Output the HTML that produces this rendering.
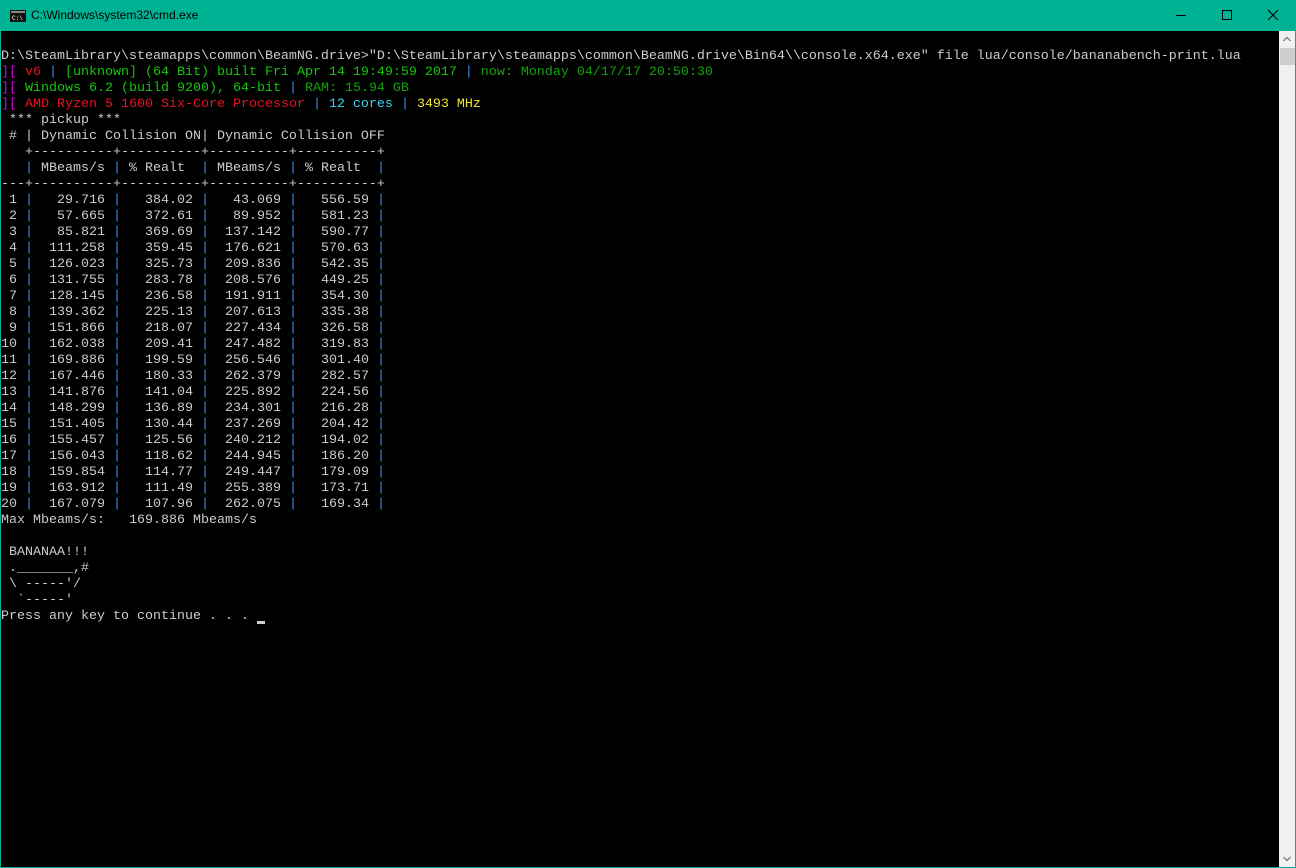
<!DOCTYPE html>
<html><head><meta charset="utf-8"><style>
html,body{margin:0;padding:0;}
body{width:1296px;height:868px;background:#00b294;position:relative;overflow:hidden;}
#title{position:absolute;left:0;top:0;width:1296px;height:31px;}
#title .t{position:absolute;left:31px;top:8px;font:12px "Liberation Sans",sans-serif;color:#000;}
#con{position:absolute;left:1px;top:31px;width:1278px;height:836px;background:#000;}
pre{margin:0;position:absolute;left:0;top:18px;font-family:"Liberation Mono",monospace;font-size:13.333px;line-height:16px;color:#cccccc;}
.m{color:#e000e0}.r{color:#e81123}.g{color:#16c60c}.dg{color:#13a10e}.b{color:#3b8eea}.c{color:#3ad6f0}.y{color:#f1e630}
#sb{position:absolute;left:1279px;top:31px;width:16px;height:836px;background:#f0f0f0;}
#thumb{position:absolute;left:1280px;top:48px;width:15px;height:17px;background:#cdcdcd;}
#cur{position:absolute;left:257px;top:621px;width:8px;height:3px;background:#ccc;}
</style></head><body>
<div id="title">
<svg width="16" height="12" style="position:absolute;left:10px;top:10px"><rect x="0" y="0" width="16" height="12" fill="#111"/><rect x="1" y="1" width="14" height="2" fill="#888"/><text x="2" y="10" font-size="6" fill="#fff" font-family="Liberation Mono">C:\</text></svg>
<div class="t">C:\Windows\system32\cmd.exe</div>
<svg width="140" height="31" style="position:absolute;left:1156px;top:0">
<line x1="20" y1="15.5" x2="30" y2="15.5" stroke="#000"/>
<rect x="66.5" y="10.5" width="9" height="9" fill="none" stroke="#000"/>
<line x1="112" y1="10" x2="122" y2="20" stroke="#000"/><line x1="122" y1="10" x2="112" y2="20" stroke="#000"/>
</svg>
</div>
<div id="con"><pre>D:\SteamLibrary\steamapps\common\BeamNG.drive&gt;"D:\SteamLibrary\steamapps\common\BeamNG.drive\Bin64\\console.x64.exe" file lua/console/bananabench-print.lua
<span class="m">][</span> <span class="r">v6</span> <span class="b">|</span> <span class="g">[unknown] (64 Bit) built Fri Apr 14 19:49:59 2017</span> <span class="b">|</span> <span class="dg">now: Monday 04/17/17 20:50:30</span>
<span class="m">][</span> <span class="g">Windows 6.2 (build 9200), 64-bit</span> <span class="b">|</span> <span class="dg">RAM: 15.94 GB</span>
<span class="m">][</span> <span class="r">AMD Ryzen 5 1600 Six-Core Processor</span> <span class="b">|</span> <span class="c">12 cores</span> <span class="b">|</span> <span class="y">3493 MHz</span>
 *** pickup ***
 # | Dynamic Collision ON| Dynamic Collision OFF
   +----------+----------+----------+----------+
   <span class="b">|</span> MBeams/s <span class="b">|</span> % Realt  <span class="b">|</span> MBeams/s <span class="b">|</span> % Realt  <span class="b">|</span>
---+----------+----------+----------+----------+
 1 <span class="b">|</span>   29.716 <span class="b">|</span>   384.02 <span class="b">|</span>   43.069 <span class="b">|</span>   556.59 <span class="b">|</span>
 2 <span class="b">|</span>   57.665 <span class="b">|</span>   372.61 <span class="b">|</span>   89.952 <span class="b">|</span>   581.23 <span class="b">|</span>
 3 <span class="b">|</span>   85.821 <span class="b">|</span>   369.69 <span class="b">|</span>  137.142 <span class="b">|</span>   590.77 <span class="b">|</span>
 4 <span class="b">|</span>  111.258 <span class="b">|</span>   359.45 <span class="b">|</span>  176.621 <span class="b">|</span>   570.63 <span class="b">|</span>
 5 <span class="b">|</span>  126.023 <span class="b">|</span>   325.73 <span class="b">|</span>  209.836 <span class="b">|</span>   542.35 <span class="b">|</span>
 6 <span class="b">|</span>  131.755 <span class="b">|</span>   283.78 <span class="b">|</span>  208.576 <span class="b">|</span>   449.25 <span class="b">|</span>
 7 <span class="b">|</span>  128.145 <span class="b">|</span>   236.58 <span class="b">|</span>  191.911 <span class="b">|</span>   354.30 <span class="b">|</span>
 8 <span class="b">|</span>  139.362 <span class="b">|</span>   225.13 <span class="b">|</span>  207.613 <span class="b">|</span>   335.38 <span class="b">|</span>
 9 <span class="b">|</span>  151.866 <span class="b">|</span>   218.07 <span class="b">|</span>  227.434 <span class="b">|</span>   326.58 <span class="b">|</span>
10 <span class="b">|</span>  162.038 <span class="b">|</span>   209.41 <span class="b">|</span>  247.482 <span class="b">|</span>   319.83 <span class="b">|</span>
11 <span class="b">|</span>  169.886 <span class="b">|</span>   199.59 <span class="b">|</span>  256.546 <span class="b">|</span>   301.40 <span class="b">|</span>
12 <span class="b">|</span>  167.446 <span class="b">|</span>   180.33 <span class="b">|</span>  262.379 <span class="b">|</span>   282.57 <span class="b">|</span>
13 <span class="b">|</span>  141.876 <span class="b">|</span>   141.04 <span class="b">|</span>  225.892 <span class="b">|</span>   224.56 <span class="b">|</span>
14 <span class="b">|</span>  148.299 <span class="b">|</span>   136.89 <span class="b">|</span>  234.301 <span class="b">|</span>   216.28 <span class="b">|</span>
15 <span class="b">|</span>  151.405 <span class="b">|</span>   130.44 <span class="b">|</span>  237.269 <span class="b">|</span>   204.42 <span class="b">|</span>
16 <span class="b">|</span>  155.457 <span class="b">|</span>   125.56 <span class="b">|</span>  240.212 <span class="b">|</span>   194.02 <span class="b">|</span>
17 <span class="b">|</span>  156.043 <span class="b">|</span>   118.62 <span class="b">|</span>  244.945 <span class="b">|</span>   186.20 <span class="b">|</span>
18 <span class="b">|</span>  159.854 <span class="b">|</span>   114.77 <span class="b">|</span>  249.447 <span class="b">|</span>   179.09 <span class="b">|</span>
19 <span class="b">|</span>  163.912 <span class="b">|</span>   111.49 <span class="b">|</span>  255.389 <span class="b">|</span>   173.71 <span class="b">|</span>
20 <span class="b">|</span>  167.079 <span class="b">|</span>   107.96 <span class="b">|</span>  262.075 <span class="b">|</span>   169.34 <span class="b">|</span>
Max Mbeams/s:   169.886 Mbeams/s

 BANANAA!!!
 ._______,#
 \ -----'/
  `-----'
Press any key to continue . . . </pre></div>
<div id="cur"></div>
<div id="sb"><svg width="16" height="17" style="position:absolute;left:0;top:0"><polyline points="4.5,10 8,6.5 11.5,10" fill="none" stroke="#707070" stroke-width="1.2"/></svg><svg width="16" height="17" style="position:absolute;left:0;bottom:0"><polyline points="4.5,7 8,10.5 11.5,7" fill="none" stroke="#707070" stroke-width="1.2"/></svg></div>
<div id="thumb"></div>
</body></html>
